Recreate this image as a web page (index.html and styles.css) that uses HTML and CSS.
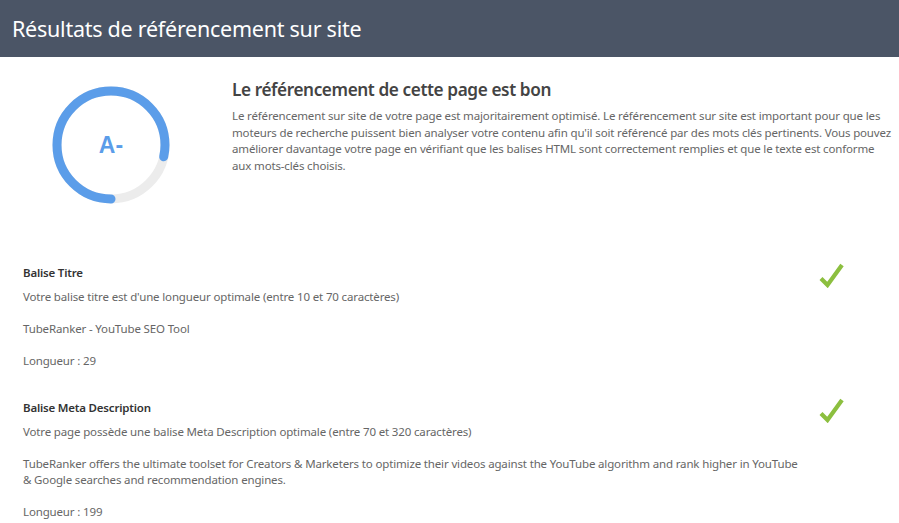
FILE: index.html
```html
<!DOCTYPE html>
<html lang="fr">
<head>
  <meta charset="UTF-8">
  <title>Résultats de référencement sur site</title>
  <link rel="stylesheet" href="styles.css">
</head>
<body>
  <div class="header">
    <h1>Résultats de référencement sur site</h1>
  </div>

  <div class="summary">
    <div class="score">
      <svg width="120" height="120" viewBox="0 0 120 120">
        <circle cx="60" cy="60" r="54" fill="none" stroke="#ececec" stroke-width="9"/>
        <circle cx="60" cy="60" r="54" fill="none" stroke="#5b9de9" stroke-width="9"
                stroke-linecap="round" stroke-dasharray="266 400" transform="rotate(90 60 60)"/>
      </svg>
      <span class="grade">A-</span>
    </div>
    <div class="summary-text">
      <h2>Le référencement de cette page est bon</h2>
      <p>Le référencement sur site de votre page est majoritairement optimisé. Le référencement sur site est important pour que les moteurs de recherche puissent bien analyser votre contenu afin qu'il soit référencé par des mots clés pertinents. Vous pouvez améliorer davantage votre page en vérifiant que les balises HTML sont correctement remplies et que le texte est conforme aux mots-clés choisis.</p>
    </div>
  </div>

  <div class="checks">
    <div class="check">
      <div class="check-body">
        <h3>Balise Titre</h3>
        <p>Votre balise titre est d'une longueur optimale (entre 10 et 70 caractères)</p>
        <p>TubeRanker - YouTube SEO Tool</p>
        <p>Longueur : 29</p>
      </div>
      <svg class="tick" width="26" height="26" viewBox="0 0 26 26">
        <path d="M3 16.5 L9.5 23 L24 3" fill="none" stroke="#8cbf3f" stroke-width="4.2"/>
      </svg>
    </div>
    <div class="check">
      <div class="check-body">
        <h3>Balise Meta Description</h3>
        <p>Votre page possède une balise Meta Description optimale (entre 70 et 320 caractères)</p>
        <p>TubeRanker offers the ultimate toolset for Creators &amp; Marketers to optimize their videos against the YouTube algorithm and rank higher in YouTube &amp; Google searches and recommendation engines.</p>
        <p>Longueur : 199</p>
      </div>
      <svg class="tick" width="26" height="26" viewBox="0 0 26 26">
        <path d="M3 16.5 L9.5 23 L24 3" fill="none" stroke="#8cbf3f" stroke-width="4.2"/>
      </svg>
    </div>
  </div>
</body>
</html>
```

FILE: styles.css
```css
body {
  margin: 0;
  font-family: "Noto Sans", "Open Sans", sans-serif;
  background: #fff;
  color: #666;
}

.header {
  background-color: #4b5566;
  height: 57px;
  display: flex;
  align-items: center;
  padding: 0 12px;
}

.header h1 {
  margin: 0;
  color: #fff;
  font-size: 21.5px;
  font-weight: 400;
  letter-spacing: -0.25px;
}

.summary {
  display: flex;
  padding: 25px 0 0 51px;
}

.score {
  position: relative;
  width: 120px;
  height: 120px;
  flex: none;
  margin-top: 3px;
}

.grade {
  position: absolute;
  inset: 0;
  display: flex;
  align-items: center;
  justify-content: center;
  color: #5b9de9;
  font-family: "Liberation Sans", Arial, sans-serif;
  font-weight: bold;
  font-size: 23px;
}

.summary-text {
  margin-left: 61px;
  width: 660px;
}

.summary-text h2 {
  margin: -4px 0 7px;
  font-size: 17.2px;
  font-weight: 600;
  color: #444;
  letter-spacing: -0.4px;
}

.summary-text p {
  margin: 0;
  font-size: 11.5px;
  line-height: 16.5px;
  letter-spacing: -0.15px;
}

.checks {
  padding: 60px 56px 0 23px;
}

.check {
  display: flex;
  justify-content: space-between;
  align-items: flex-start;
  margin-bottom: 15px;
}

.check-body {
  max-width: 776px;
}

.check h3 {
  margin: 0 0 9px;
  font-size: 11.5px;
  font-weight: 600;
  color: #333;
  letter-spacing: -0.2px;
}

.check p {
  margin: 0 0 16px;
  font-size: 11.5px;
  line-height: 16px;
  letter-spacing: -0.15px;
}

.tick {
  margin-top: -3px;
  margin-right: -1px;
}
```
